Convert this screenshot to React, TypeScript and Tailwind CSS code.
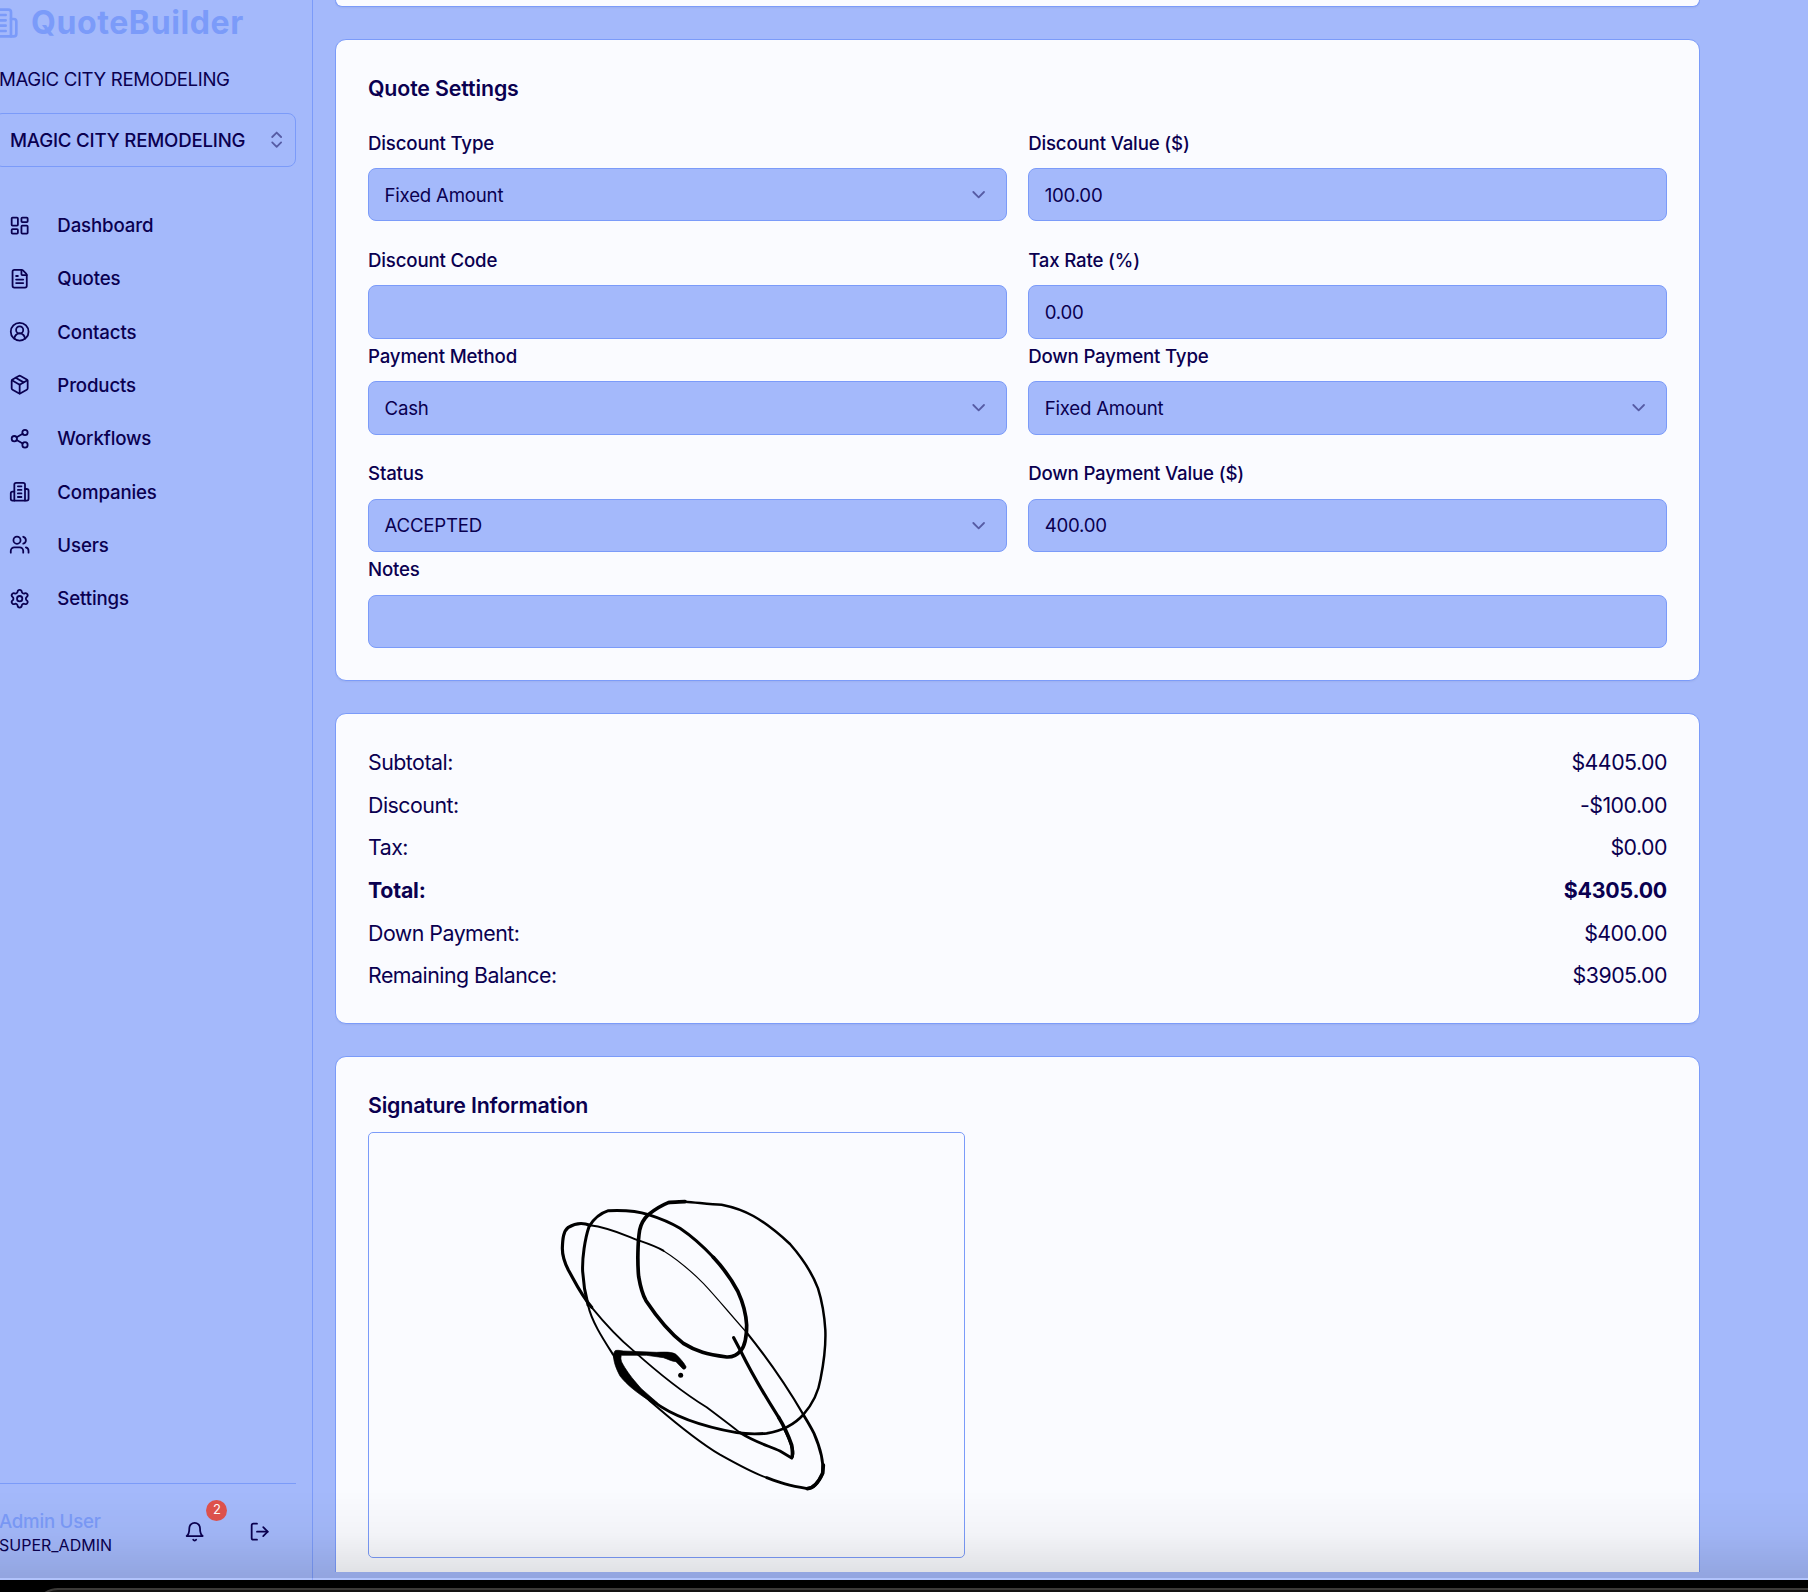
import React from "react";
import {
  ChevronDown,
  ChevronsUpDown,
  CircleUserRound,
  FileText,
  LayoutDashboard,
  LogOut,
  Package,
  Settings,
  Share2,
  Users,
} from "lucide-react";

type IconProps = { className?: string; strokeWidth?: number };

function CompanyIcon({ className }: IconProps) {
  return (
    <svg
      className={className}
      viewBox="0 0 24 24"
      fill="none"
      stroke="currentColor"
      strokeWidth="2"
      strokeLinecap="round"
      strokeLinejoin="round"
    >
      <path d="M6 22V4a2 2 0 0 1 2-2h8a2 2 0 0 1 2 2v18Z" />
      <path d="M6 12H4a2 2 0 0 0-2 2v6a2 2 0 0 0 2 2h2" />
      <path d="M18 9h2a2 2 0 0 1 2 2v9a2 2 0 0 1-2 2h-2" />
      <path d="M10 6h4M10 10h4M10 14h4M10 18h4" />
    </svg>
  );
}

function BellIcon({ className }: IconProps) {
  return (
    <svg
      className={className}
      viewBox="0 0 24 24"
      fill="none"
      stroke="currentColor"
      strokeWidth="2"
      strokeLinecap="round"
      strokeLinejoin="round"
    >
      <path d="M6 8a6 6 0 0 1 12 0c0 7 3 9 3 9H3s3-2 3-9" />
      <path d="M10.3 21a1.94 1.94 0 0 0 3.4 0" />
    </svg>
  );
}

const navItems: { label: string; icon: React.ComponentType<IconProps> }[] = [
  { label: "Dashboard", icon: LayoutDashboard },
  { label: "Quotes", icon: FileText },
  { label: "Contacts", icon: CircleUserRound },
  { label: "Products", icon: Package },
  { label: "Workflows", icon: Share2 },
  { label: "Companies", icon: CompanyIcon },
  { label: "Users", icon: Users },
  { label: "Settings", icon: Settings },
];

const totals = [
  { label: "Subtotal:", value: "$4405.00" },
  { label: "Discount:", value: "-$100.00" },
  { label: "Tax:", value: "$0.00" },
  { label: "Total:", value: "$4305.00", bold: true },
  { label: "Down Payment:", value: "$400.00" },
  { label: "Remaining Balance:", value: "$3905.00" },
];

function Sidebar() {
  return (
    <aside className="flex w-[313px] shrink-0 flex-col overflow-hidden border-r border-[#7b9bf9] pr-4">
      <div className="-ml-[13.5px] mt-[7px] flex h-8 items-center gap-[12.5px] text-[#7b9bf9]">
        <CompanyIcon className="size-8 shrink-0" />
        <span className="text-[32px] font-bold leading-8 tracking-[0.6px]">QuoteBuilder</span>
      </div>
      <div className="-ml-px mt-[26.5px] h-7 whitespace-nowrap text-[18.67px] leading-7 tracking-[-0.37px]">
        MAGIC CITY REMODELING
      </div>
      <div className="-ml-[6px] mt-[19.5px] flex h-[53.5px] shrink-0 items-center justify-between rounded-lg border border-[#7b9bf9] pl-[15px] pr-2 font-medium">
        <span className="whitespace-nowrap pt-[2px] text-[18.67px] tracking-[-0.2px]">MAGIC CITY REMODELING</span>
        <ChevronsUpDown className="size-[21.33px] opacity-50" />
      </div>
      <nav className="mt-8 flex flex-col">
        {navItems.map(({ label, icon: Icon }) => (
          <a
            key={label}
            className="flex h-[53.33px] items-center gap-[27px] pl-[9px] text-[18.67px] font-medium tracking-[-0.15px]"
          >
            <Icon className="size-[21.33px]" />
            <span className="pt-[2px]">{label}</span>
          </a>
        ))}
      </nav>
      <div className="mb-[24px] mt-auto flex h-[73px] items-end justify-between border-t border-[#7b9bf9]">
        <div className="-ml-px flex flex-col">
          <span className="text-[18.67px] font-medium leading-[25px] tracking-[-0.25px] text-[#7b9bf9]">
            Admin User
          </span>
          <span className="text-base leading-[22px]">SUPER_ADMIN</span>
        </div>
        <div className="mb-[14px] mr-[26px] flex items-center gap-[43px]">
          <div className="relative">
            <BellIcon className="size-[21.33px]" />
            <span className="absolute -top-[21px] left-[22px] flex size-[21px] items-center justify-center rounded-full bg-[#e0524d] text-[13px] text-white">
              2
            </span>
          </div>
          <LogOut className="size-[21.33px]" />
        </div>
      </div>
    </aside>
  );
}

function Field({
  label,
  value = "",
  select = false,
}: {
  label: string;
  value?: string;
  select?: boolean;
}) {
  return (
    <div>
      <div className="mb-[10.5px] pt-[1.5px] text-[18.67px] font-medium leading-7 tracking-[-0.17px]">{label}</div>
      <div className="flex h-[53.33px] items-center justify-between rounded-lg border border-[#7b9bf9] bg-[#a4b9fb] pl-[15.5px] pr-[16.5px] text-[18.67px] tracking-[-0.22px]">
        <span className="pt-[2px]">{value}</span>
        {select && <ChevronDown className="size-[21.33px] opacity-50" />}
      </div>
    </div>
  );
}

function QuoteSettings() {
  return (
    <section className="shrink-0 rounded-[11px] border border-[#7b9bf9] bg-[#fafbff] p-8 shadow-xs">
      <h2 className="mb-6 h-8 text-[21.33px] font-semibold leading-8 tracking-[-0.12px]">Quote Settings</h2>
      <div className="flex flex-col gap-[2.67px]">
        <div className="grid grid-cols-2 gap-x-[21.33px] gap-y-6">
          <Field label="Discount Type" value="Fixed Amount" select />
          <Field label="Discount Value ($)" value="100.00" />
          <Field label="Discount Code" />
          <Field label="Tax Rate (%)" value="0.00" />
        </div>
        <div className="grid grid-cols-2 gap-x-[21.33px] gap-y-6">
          <Field label="Payment Method" value="Cash" select />
          <Field label="Down Payment Type" value="Fixed Amount" select />
          <Field label="Status" value="ACCEPTED" select />
          <Field label="Down Payment Value ($)" value="400.00" />
        </div>
        <Field label="Notes" />
      </div>
    </section>
  );
}

function Totals() {
  return (
    <section className="flex shrink-0 flex-col gap-[10.67px] rounded-[11px] border border-[#7b9bf9] bg-[#fafbff] p-8 shadow-xs">
      {totals.map((row) => (
        <div
          key={row.label}
          className={
            row.bold
              ? "flex h-8 items-center justify-between pt-[2px] text-[21.33px] font-bold tracking-[-0.22px]"
              : "flex h-8 items-center justify-between pt-[2px] text-[21.33px] tracking-[-0.5px]"
          }
        >
          <span>{row.label}</span>
          <span>{row.value}</span>
        </div>
      ))}
    </section>
  );
}

function SignatureDrawing() {
  return (
    <svg
      className="block h-full w-full"
      viewBox="0 0 595 424"
      fill="none"
      stroke="#000"
      strokeLinecap="round"
      strokeLinejoin="round"
    >
      <g transform="translate(171 47) scale(0.33333)">
        <path strokeWidth="9" d="M433 562L408 538M340 664C300 635 262 600 241 570C232 548 224 530 228 517" />
        <path
          strokeWidth="2"
          fill="#000"
          d="M226 512C232 509 240 512 250 513L350 517C375 516 395 515 408 523C420 535 432 548 438 560C438 568 430 570 426 564L408 545C395 544 385 538 370 533L320 526L244 526C240 540 246 548 254 562C266 582 284 604 304 626L352 668C345 678 338 670 325 660C290 638 258 612 240 588C228 565 220 545 220 522Z"
        />
        <path strokeWidth="8.5" d="M340 664C400 710 480 738 590 758C620 762 655 762 680 760C730 752 765 732 790 704" />
        <path strokeWidth="7.5" d="M790 704C815 675 835 640 842 595C852 545 858 500 856 450C853 400 845 360 834 325C815 275 785 232 750 192C710 155 665 122 640 108C605 88 575 80 545 74C510 74 470 67 435 65" />
        <path strokeWidth="11" d="M435 65C415 66 395 66 385 68C355 80 340 92 325 104C310 118 303 132 299 150C293 185 292 250 296 290C302 325 308 345 318 362C350 410 385 455 430 490C470 515 500 522 560 531C580 532 592 525 602 512C615 498 620 470 620 435C618 400 610 370 594 335C580 308 560 275 520 232" />
        <path strokeWidth="9" d="M520 232C490 200 460 172 420 145C390 127 360 115 325 104C290 92 250 90 205 92C180 100 160 118 147 140C135 175 126 235 128 275C130 310 136 345 144 375" />
        <path strokeWidth="6" d="M144 375C155 425 190 478 220 525C240 575 300 640 350 680C420 740 500 800 540 824C590 852 640 880 680 893" />
        <path strokeWidth="8.5" d="M680 893C720 908 740 916 802 926C825 925 838 902 848 880C852 840 835 790 822 760C812 740 800 720 790 704" />
        <path strokeWidth="11" d="M802 926C825 925 838 902 848 880L850 855" />
        <path strokeWidth="6.5" d="M790 704C750 635 690 545 622 460" />
        <path strokeWidth="3.5" d="M622 460C570 402 530 352 490 310C455 275 415 240 370 212" />
        <path strokeWidth="6" d="M370 212C350 200 330 193 298 182C255 166 205 142 150 136" />
        <path strokeWidth="9.5" d="M150 136C130 128 108 128 85 142C70 154 68 175 67 205C67 230 72 245 85 270C105 305 120 340 155 382" />
        <path strokeWidth="5.5" d="M155 382C190 425 230 470 280 512C350 575 440 645 500 682C540 712 570 735 600 758" />
        <path strokeWidth="8.5" d="M600 758C650 790 690 798 720 813L755 834C760 828 760 820 757 805C750 780 740 760 730 740" />
        <path strokeWidth="11" d="M755 832C760 825 758 815 755 795C745 765 730 735 716 712" />
        <path strokeWidth="9.5" d="M716 712C670 640 635 580 602 513L581 473" />
        <circle cx="422" cy="586" r="7.5" fill="#000" stroke="none" />
      </g>
    </svg>
  );
}

function SignatureCard() {
  return (
    <section className="h-[600px] shrink-0 rounded-[11px] border border-[#7b9bf9] bg-[#fafbff] p-8 shadow-xs">
      <h2 className="mb-[11px] h-8 text-[21.33px] font-semibold leading-8 tracking-[-0.17px]">
        Signature Information
      </h2>
      <div className="h-[426px] w-[597px] rounded-[5px] border border-[#7b9bf9]">
        <SignatureDrawing />
      </div>
    </section>
  );
}

export default function App() {
  return (
    <div
      className="relative flex h-[1592px] w-[1808px] flex-col overflow-hidden bg-black text-[#0a0050]"
      style={{ fontFamily: 'Inter, "Liberation Sans", sans-serif' }}
    >
      <div className="flex h-[1580px] shrink-0 bg-[#a4b9fb]">
        <Sidebar />
        <main className="ml-[22px] flex h-[1572px] w-[1365px] flex-col gap-8 overflow-hidden">
          <div className="h-[7px] shrink-0 rounded-b-[11px] border border-t-0 border-[#7b9bf9] bg-[#fafbff] shadow-xs" />
          <QuoteSettings />
          <Totals />
          <SignatureCard />
        </main>
      </div>
      <div className="pointer-events-none absolute inset-x-0 top-[1490px] h-[90px] border-b-2 border-white/15 bg-gradient-to-b from-black/0 via-black/3 to-black/11" />
      <div className="ml-[34px] mt-2 h-10 w-[1900px] shrink-0 rounded-tl-[24px] border-2 border-[#3b3937] bg-[#141312]" />
    </div>
  );
}
